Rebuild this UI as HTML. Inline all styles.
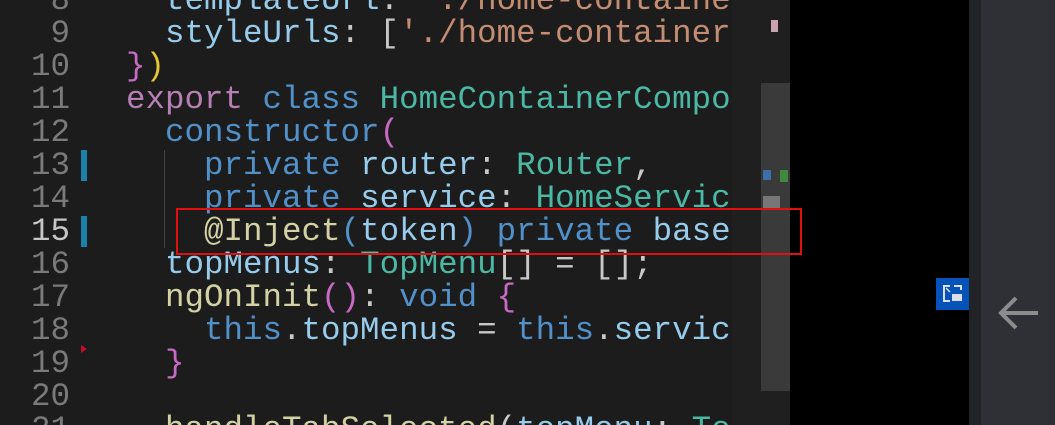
<!DOCTYPE html>
<html><head><style>
html,body{margin:0;padding:0;width:1055px;height:425px;overflow:hidden;background:#000;position:relative}
.ed{position:absolute;left:0;top:0;width:732px;height:425px;background:#1c1c1c;overflow:hidden}
.mm{position:absolute;left:732px;top:0;width:58px;height:425px;background:#1f1f1f}
.sb{position:absolute;left:761px;top:83px;width:29px;height:308px;background:#3a3a3a}
.blk{position:absolute;left:790px;top:0;width:179px;height:425px;background:#000}
.strip{position:absolute;left:969px;top:0;width:12px;height:425px;background:#222326}
.rp{position:absolute;left:981px;top:0;width:74px;height:425px;background:#2e3035}
.ln{position:absolute;left:0;width:70px;text-align:right;color:#7a7a7a}
.cl{position:absolute;left:126px;white-space:pre;color:#c8c8c8}
.ln,.cl{font-family:"Liberation Mono",monospace;font-size:32.5px;line-height:33px;height:33px}
.k{color:#b77fb3}.b{color:#5190c8}.t{color:#4ab8a2}.f{color:#d2d2a4}.v{color:#96cbeb}.s{color:#c48c72}.y{color:#e8c630}.p{color:#c86ac4}
</style></head><body>
<div class="ed">
<div class="ln" style="top:-16px">8</div><div class="cl" style="top:-16px">  <span class="v">templateUrl</span>: <span class="s">'./home-container</span></div>
<div class="ln" style="top:17px">9</div><div class="cl" style="top:17px">  <span class="v">styleUrls</span>: [<span class="s">'./home-container</span></div>
<div class="ln" style="top:50px">10</div><div class="cl" style="top:50px"><span class="p">}</span><span class="y">)</span></div>
<div class="ln" style="top:83px">11</div><div class="cl" style="top:83px"><span class="k">export</span> <span class="b">class</span> <span class="t">HomeContainerCompo</span></div>
<div class="ln" style="top:116px">12</div><div class="cl" style="top:116px">  <span class="b">constructor</span><span class="p">(</span></div>
<div class="ln" style="top:149px">13</div><div class="cl" style="top:149px">    <span class="b">private</span> <span class="v">router</span>: <span class="t">Router</span>,</div>
<div class="ln" style="top:182px">14</div><div class="cl" style="top:182px">    <span class="b">private</span> <span class="v">service</span>: <span class="t">HomeServic</span></div>
<div class="ln" style="top:215px;color:#c6c6c6">15</div><div class="cl" style="top:215px">    <span class="f">@Inject</span><span class="b">(</span><span class="v">token</span><span class="b">)</span> <span class="b">private</span> <span class="v">base</span></div>
<div class="ln" style="top:248px">16</div><div class="cl" style="top:248px">  <span class="v">topMenus</span>: <span class="t">TopMenu</span>[] = [];</div>
<div class="ln" style="top:281px">17</div><div class="cl" style="top:281px">  <span class="f">ngOnInit</span><span class="p">()</span>: <span class="b">void</span> <span class="p">{</span></div>
<div class="ln" style="top:314px">18</div><div class="cl" style="top:314px">    <span class="b">this</span>.<span class="v">topMenus</span> = <span class="b">this</span>.<span class="v">servic</span></div>
<div class="ln" style="top:347px">19</div><div class="cl" style="top:347px">  <span class="p">}</span></div>
<div class="ln" style="top:380px">20</div>
<div class="ln" style="top:413px">21</div><div class="cl" style="top:413px">  <span class="f">handleTabSelected</span>(<span class="v">topMenu</span>: <span class="t">To</span></div>
<div style="position:absolute;left:81px;top:150px;width:6px;height:31px;background:#1b81a8"></div>
<div style="position:absolute;left:81px;top:216px;width:6px;height:31px;background:#1b81a8"></div>
<div style="position:absolute;left:81px;top:345px;width:0;height:0;border-left:6px solid #c01030;border-top:4px solid transparent;border-bottom:4px solid transparent"></div>
<div style="position:absolute;left:164px;top:150px;width:1px;height:98px;background:#404040"></div>
</div>
<div class="mm"></div>
<div class="sb"></div>
<div style="position:absolute;left:771px;top:20px;width:7px;height:12px;background:#c9a3b0"></div>
<div style="position:absolute;left:763px;top:170px;width:8px;height:10px;background:#3a6fa8"></div>
<div style="position:absolute;left:780px;top:170px;width:8px;height:12px;background:#3f8a3f"></div>
<div style="position:absolute;left:763px;top:196px;width:17px;height:14px;background:#777"></div>
<div class="blk"></div>
<div class="strip"></div>
<div class="rp"></div>
<div style="position:absolute;left:176px;top:208px;width:626px;height:47px;border:2px solid #e01010;box-sizing:border-box"></div>
<div style="position:absolute;left:936px;top:278px;width:33px;height:32px;background:#0552b8"></div>
<svg style="position:absolute;left:936px;top:278px" width="33" height="32" viewBox="0 0 33 32"><path d="M14 8H8v15h6" fill="none" stroke="#dde" stroke-width="2"/><path d="M18 8h7v4" fill="none" stroke="#dde" stroke-width="2"/><rect x="16" y="16" width="10" height="7" fill="#dde"/><path d="M10 10l4 4" stroke="#dde" stroke-width="1.5"/></svg>
<svg style="position:absolute;left:996px;top:290px" width="46" height="46" viewBox="0 0 46 46"><path d="M42 23H6M20 8L5 23l15 15" fill="none" stroke="#8c8c8c" stroke-width="4"/></svg>
</body></html>
